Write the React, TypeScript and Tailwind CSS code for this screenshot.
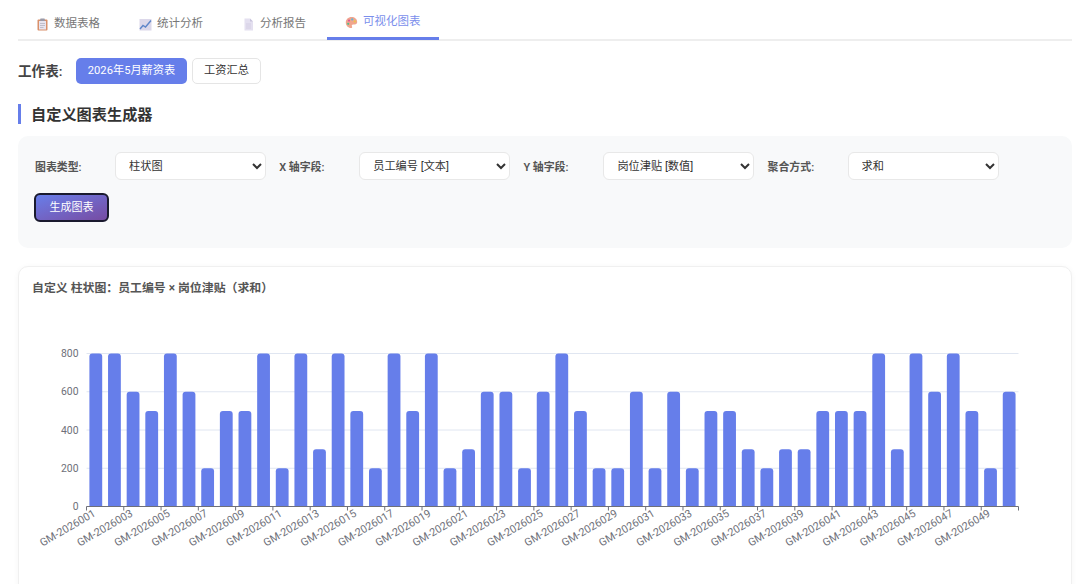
import React from 'react';

const values = [
  800, 800, 600, 500, 800, 600, 200, 500, 500, 800,
  200, 800, 300, 800, 500, 200, 800, 500, 800, 200,
  300, 600, 600, 200, 600, 800, 500, 200, 200, 600,
  200, 600, 200, 500, 500, 300, 200, 300, 300, 500,
  500, 500, 800, 300, 800, 600, 800, 500, 200, 600,
];

// chart geometry, relative to the svg
const left = 54.5;
const right = 986.5;
const top = 10.5;
const bottom = 163.5;
const band = (right - left) / values.length;

const ClipboardIcon = () => (
  <svg width="13" height="13" viewBox="0 0 13 13">
    <rect x="1.5" y="1.5" width="10" height="11" rx="1" fill="#d9906a" />
    <rect x="3" y="3" width="7" height="8.5" fill="#e8e4ee" />
    <rect x="4.2" y="0.5" width="4.6" height="2.5" rx="0.6" fill="#9a9aa8" />
    <path d="M4 5.5h5M4 7.5h5M4 9.5h3.5" stroke="#b5b2c0" strokeWidth="0.8" />
  </svg>
);

const TrendIcon = () => (
  <svg width="13" height="13" viewBox="0 0 13 13">
    <rect x="0.5" y="1" width="12" height="11.5" fill="#dcd8ea" />
    <path d="M1 11l3-3.5 2.5 1.5L12 2.5" fill="none" stroke="#5f86c9" strokeWidth="1.4" />
  </svg>
);

const PageIcon = () => (
  <svg width="13" height="13" viewBox="0 0 13 13">
    <path d="M2.5 0.5h5.5l3 3v9h-8.5z" fill="#e4e0f0" />
    <path d="M8 0.5v3h3z" fill="#c9c4dc" />
    <path d="M4 6h5M4 8h5M4 10h5" stroke="#cfcadf" strokeWidth="0.8" />
  </svg>
);

const PaletteIcon = () => (
  <svg width="13" height="13" viewBox="0 0 13 13">
    <path d="M6.5 1C3.2 1 .8 3.4.8 6.5s2.4 5.5 5.2 5.5c1.2 0 1.4-.9 1-1.6-.5-.9 0-1.8 1.1-1.8h1.6c1.5 0 2.5-1 2.5-2.5C12.2 3 9.7 1 6.5 1z" fill="#f0a58e" />
    <circle cx="4" cy="4.6" r="1.1" fill="#e0559a" />
    <circle cx="7.2" cy="3.4" r="1.1" fill="#5fb8d8" />
    <circle cx="9.8" cy="5.4" r="1.1" fill="#e9c64f" />
    <circle cx="3.2" cy="7.8" r="1.1" fill="#58b98a" />
  </svg>
);

const tabs = [
  { label: '数据表格', icon: <ClipboardIcon /> },
  { label: '统计分析', icon: <TrendIcon /> },
  { label: '分析报告', icon: <PageIcon /> },
  { label: '可视化图表', icon: <PaletteIcon />, active: true },
];

const fields = [
  { label: '图表类型:', value: '柱状图', options: ['柱状图', '折线图', '饼图'] },
  { label: 'X 轴字段:', value: '员工编号 [文本]', options: ['员工编号 [文本]', '姓名 [文本]'] },
  { label: 'Y 轴字段:', value: '岗位津贴 [数值]', options: ['岗位津贴 [数值]', '基本工资 [数值]'] },
  { label: '聚合方式:', value: '求和', options: ['求和', '平均', '计数'] },
];

const BarChart = () => (
  <svg width="1030" height="270" className="block">
    {[0, 200, 400, 600, 800].map((v) => {
      const y = bottom - (v / 800) * (bottom - top);
      return (
        <g key={v}>
          {v > 0 && <line x1={left} x2={right} y1={y} y2={y} stroke="#e0e6f1" />}
          <text x={left - 8} y={y + 3.5} textAnchor="end" fontSize="10.4" fill="#6e7079">
            {v}
          </text>
        </g>
      );
    })}
    {values.map((v, i) => {
      const h = (v / 800) * (bottom - top);
      return (
        <path
          key={i}
          d={`M${left + i * band + 2.9} ${bottom}v${-(h - 3)}q0 -3 3 -3h6.8q3 0 3 3v${h - 3}z`}
          fill="#667eea"
        />
      );
    })}
    <line x1={left} x2={right} y1={bottom} y2={bottom} stroke="#6e7079" />
    {values.map((_, i) =>
      i % 2 === 0 ? (
        <g key={i}>
          <line x1={left + i * band} x2={left + i * band} y1={bottom} y2={bottom + 4} stroke="#6e7079" />
          <text
            transform={`translate(${left + i * band + band / 2 + 0.5} ${bottom + 9}) rotate(-30)`}
            textAnchor="end"
            fontSize="10.8"
            fill="#6e7079"
          >
            {`GM-2026${String(i + 1).padStart(3, '0')}`}
          </text>
        </g>
      ) : null
    )}
    <line x1={right} x2={right} y1={bottom} y2={bottom + 4} stroke="#6e7079" />
  </svg>
);

export default function App() {
  return (
    <div className="h-[584px] overflow-hidden bg-white pl-[18px] pr-[8px] font-['Roboto','Noto_Sans_CJK_SC',sans-serif] text-[#333]">
      <div className="flex h-[41px] gap-[3px] border-b-2 border-[#eeeeee] pt-[9px]">
        {tabs.map((tab) => (
          <div
            key={tab.label}
            className={
              tab.active
                ? 'flex h-[31px] items-center gap-[5px] border-b-[3px] border-[#667eea] px-[18px] pb-[2px] text-[11.5px] text-[#7b8fec]'
                : 'flex h-[31px] w-[100px] items-center gap-[5px] px-[18px] pb-[1px] text-[11.5px] text-[#777777]'
            }
          >
            {tab.icon}
            <span>{tab.label}</span>
          </div>
        ))}
      </div>

      <div className="mt-[17px] flex h-[26px] items-center">
        <span className="w-[58px] pt-[1px] text-[13.6px] font-semibold text-[#444]">工作表:</span>
        <button className="h-[26px] w-[111px] rounded-[5px] bg-[#667eea] pt-[1px] text-[11.2px] text-white">2026年5月薪资表</button>
        <button className="ml-[5px] h-[26px] w-[69px] rounded-[5px] border border-[#e5e5e5] bg-white pt-[1px] text-[11.2px] text-[#333]">工资汇总</button>
      </div>

      <div className="mt-[20px] flex h-[20px] items-center border-l-[3px] border-[#667eea] pl-[10px]">
        <h2 className="pt-[2px] text-[15.2px] font-semibold text-[#333]">自定义图表生成器</h2>
      </div>

      <div className="mt-[12px] h-[112px] rounded-[10px] bg-[#f8f9fa] pl-[17px] pt-[16px]">
        <div className="flex gap-[13.2px]">
          {fields.map((f) => (
            <div key={f.label} className="flex items-center gap-[13px]">
              <label className="w-[67px] pt-[5px] text-[10.9px] font-semibold text-[#555]">{f.label}</label>
              <select
                defaultValue={f.value}
                className="h-[28px] w-[151px] rounded-[6px] border border-[#e8e8e8] bg-white pl-[9px] text-[11.2px] text-[#333]"
              >
                {f.options.map((o) => (
                  <option key={o}>{o}</option>
                ))}
              </select>
            </div>
          ))}
        </div>
        <button className="-ml-px mt-[13px] h-[29px] w-[75px] rounded-[6px] border-2 border-[#1a1a2e] bg-gradient-to-br from-[#667eea] to-[#764ba2] pt-[1px] text-[11px] text-white">
          生成图表
        </button>
      </div>

      <div className="mt-[18px] h-[400px] rounded-[10px] border border-[#f0f0f0] bg-white pl-[13px] pt-[14px] shadow-[0_1px_6px_rgba(0,0,0,0.04)]">
        <div className="text-[11.9px] font-semibold leading-[15px] text-[#555]">自定义 柱状图：员工编号 × 岗位津贴（求和）</div>
        <div className="-ml-[13px] mt-[47px] pl-[13px]">
          <BarChart />
        </div>
      </div>
    </div>
  );
}
